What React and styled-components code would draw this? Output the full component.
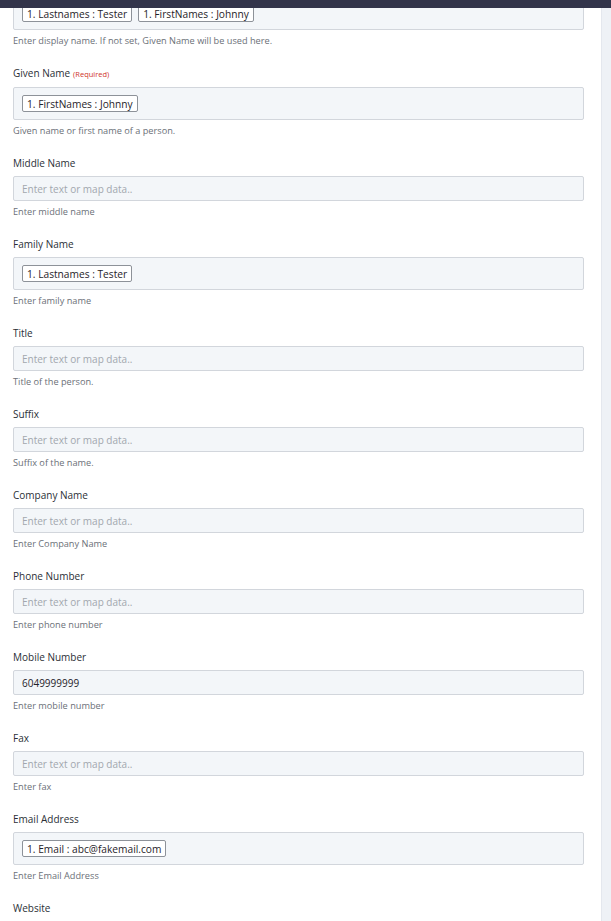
import { useLayoutEffect, useRef } from "react"
import styled, { createGlobalStyle } from "styled-components"

const GlobalStyle = createGlobalStyle`
    html, body {
        margin: 0;
        padding: 0;
        background: #ffffff;
        font-family: "Open Sans", "Noto Sans", sans-serif;
    }
`

const Page = styled.div`
    display: flex;
    flex-direction: column;
    height: 100vh;
    overflow: hidden;
`
const TopBar = styled.div`
    height: 8px;
    flex: none;
    background: #32344a;
`
const Body = styled.div`
    display: flex;
    flex: 1;
    min-height: 0;
`
const Panel = styled.div`
    flex: 1;
    overflow: hidden;
    background: #ffffff;
`
const Rail = styled.div`
    width: 9px;
    flex: none;
    background: #eef1f6;
    border-left: 1px solid #e4e7ee;
`
const Form = styled.div`
    display: flex;
    flex-direction: column;
    gap: 18px;
    padding: 16px 17px 40px 13px;
`
const Field = styled.div`
    display: flex;
    flex-direction: column;
`
const Label = styled.div`
    font-size: 10px;
    line-height: 14px;
    color: #2b2f36;
    margin-bottom: 6px;
`
const Required = styled.span`
    font-size: 7.5px;
    color: #d0342c;
    margin-left: 3px;
`
const Box = styled.div`
    box-sizing: border-box;
    height: ${(p) => (p.$tags ? "33px" : "25px")};
    display: flex;
    align-items: center;
    gap: 6px;
    padding: 0 8px;
    background: #f3f6f9;
    border: 1px solid #d2d6dc;
    border-radius: 2px;
    font-size: 10px;
    color: ${(p) => (p.$empty ? "#a2a7ae" : "#1f2329")};
`
const Tag = styled.span`
    box-sizing: border-box;
    height: 17px;
    display: inline-flex;
    align-items: center;
    padding: 0 4px;
    background: #ffffff;
    border: 1px solid #8d9299;
    border-radius: 2px;
    font-size: 10.2px;
    color: #1f2329;
    white-space: nowrap;
`
const Help = styled.div`
    font-size: 9.2px;
    line-height: 14px;
    margin-top: 4px;
    color: #6b7078;
`

const fields = [
    { label: "Display Name", tags: ["1. Lastnames : Tester", "1. FirstNames : Johnny"], help: "Enter display name. If not set, Given Name will be used here." },
    { label: "Given Name", required: true, tags: ["1. FirstNames : Johnny"], help: "Given name or first name of a person." },
    { label: "Middle Name", help: "Enter middle name" },
    { label: "Family Name", tags: ["1. Lastnames : Tester"], help: "Enter family name" },
    { label: "Title", help: "Title of the person." },
    { label: "Suffix", help: "Suffix of the name." },
    { label: "Company Name", help: "Enter Company Name" },
    { label: "Phone Number", help: "Enter phone number" },
    { label: "Mobile Number", value: "6049999999", help: "Enter mobile number" },
    { label: "Fax", help: "Enter fax" },
    { label: "Email Address", tags: ["1. Email : abc@fakemail.com"], help: "Enter Email Address" },
    { label: "Website", help: "Enter website" },
]

const FieldRow = ({ field }) => {
    const hasTags = field.tags && field.tags.length > 0
    const empty = !hasTags && !field.value
    return (
        <Field>
            <Label>
                {field.label}
                {field.required && <Required>(Required)</Required>}
            </Label>
            <Box $tags={hasTags} $empty={empty}>
                {hasTags
                    ? field.tags.map((t) => <Tag key={t}>{t}</Tag>)
                    : field.value || "Enter text or map data.."}
            </Box>
            <Help>{field.help}</Help>
        </Field>
    )
}

const App = () => {
    const panelRef = useRef(null)

    // the list is shown already scrolled past the first label
    useLayoutEffect(() => {
        if (panelRef.current) panelRef.current.scrollTop = 47
    }, [])

    return (
        <>
            <GlobalStyle />
            <Page>
                <TopBar />
                <Body>
                    <Panel ref={panelRef}>
                        <Form>
                            {fields.map((f) => (
                                <FieldRow key={f.label} field={f} />
                            ))}
                        </Form>
                    </Panel>
                    <Rail />
                </Body>
            </Page>
        </>
    )
}

export default App
